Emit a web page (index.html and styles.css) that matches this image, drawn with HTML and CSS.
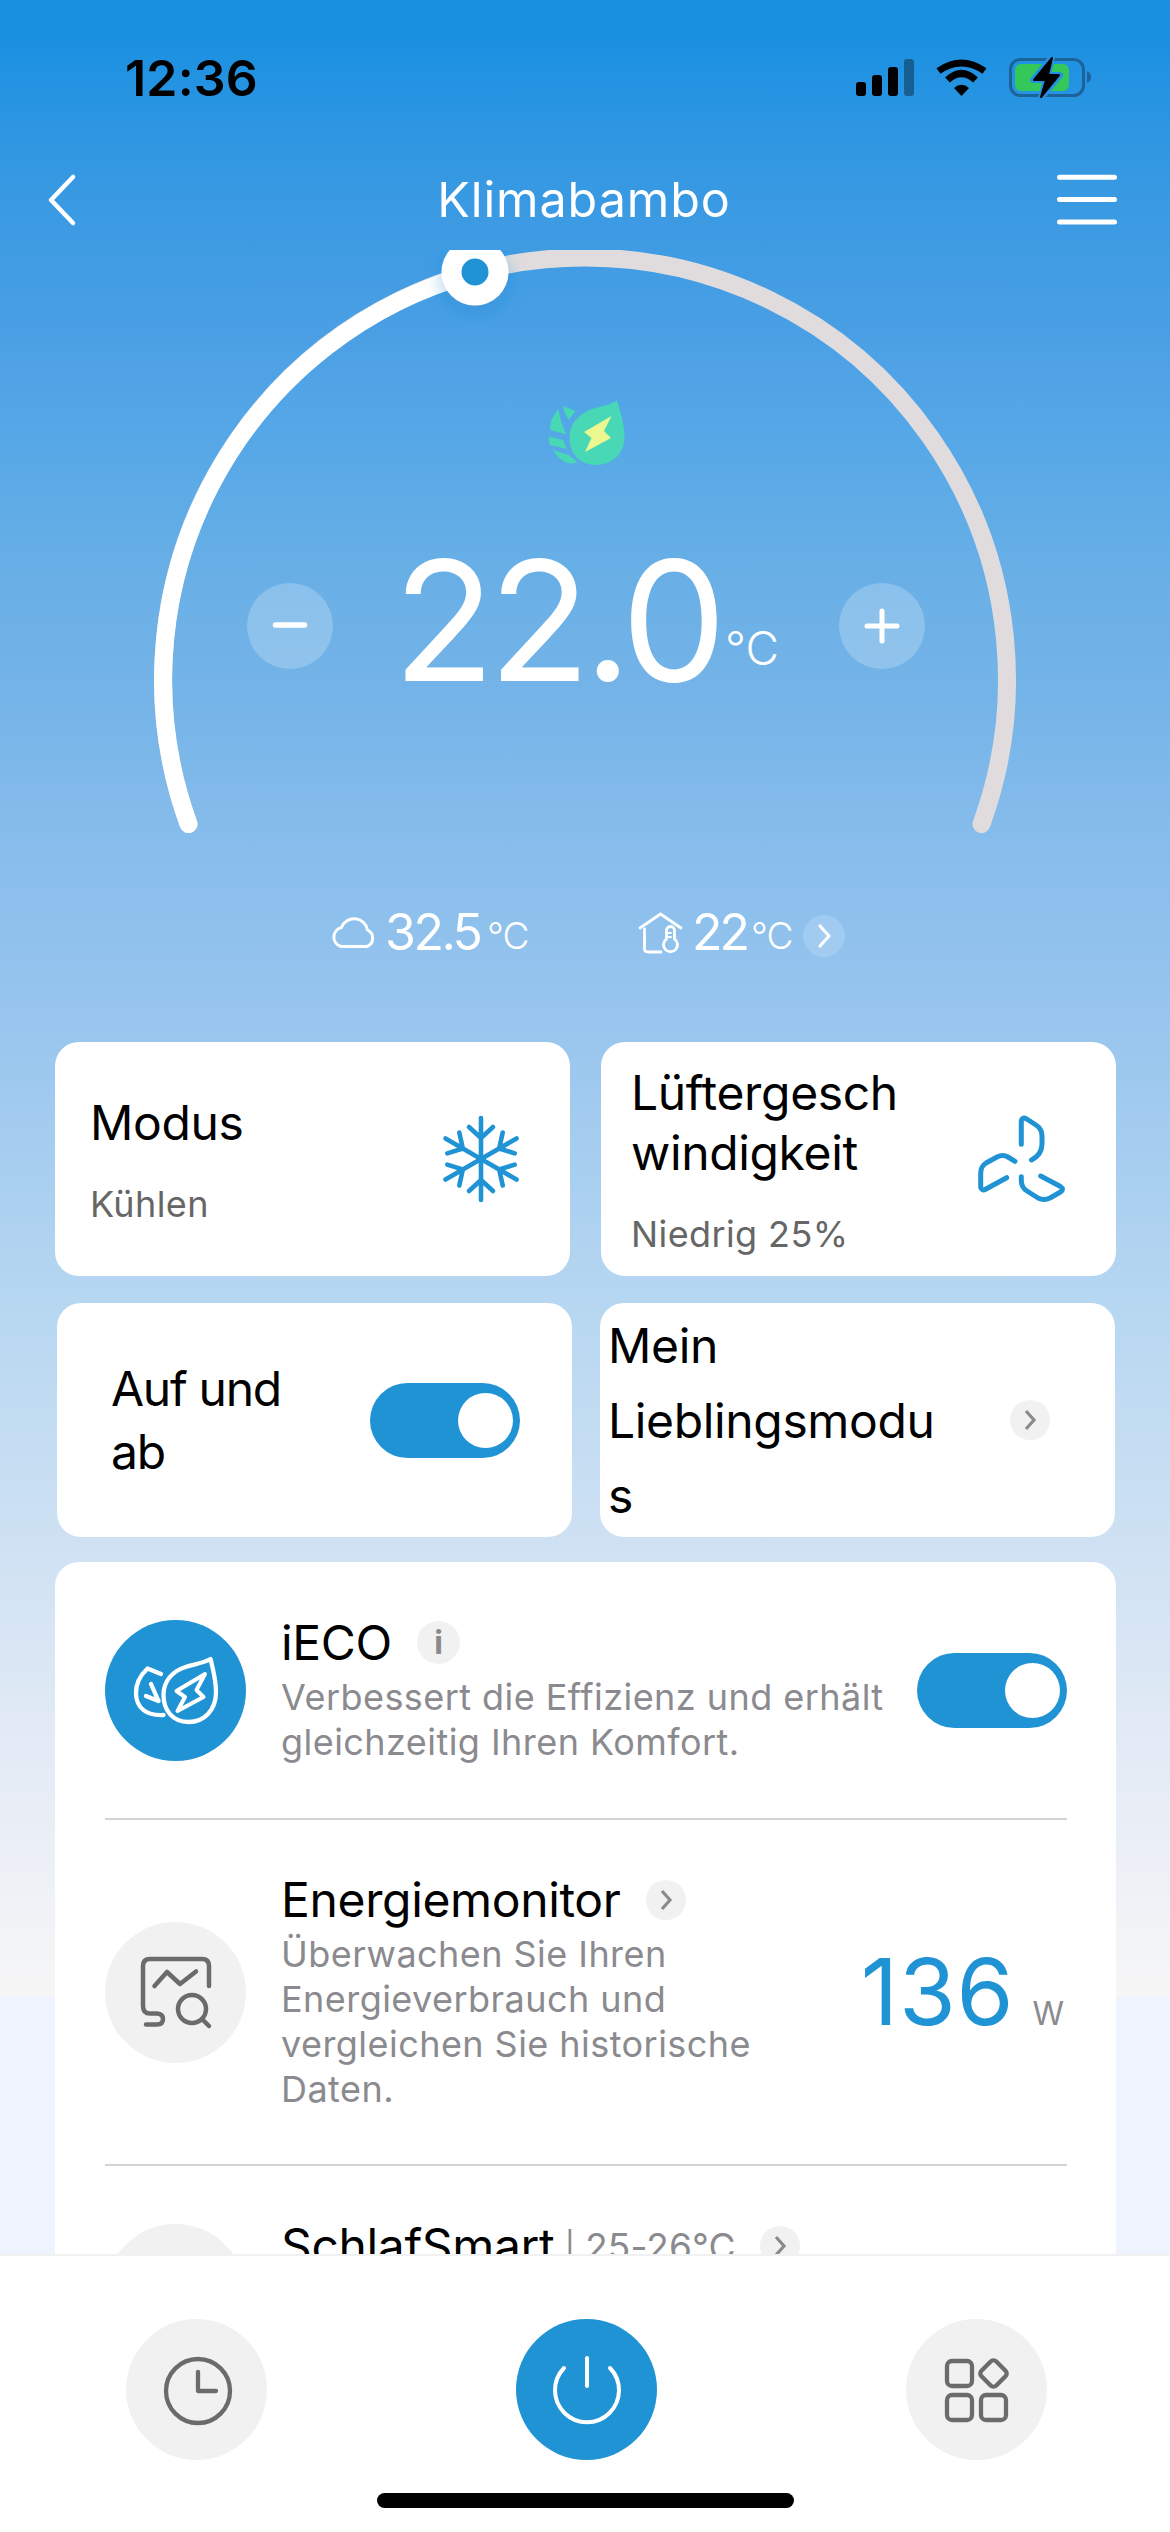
FILE: index.html
```html
<!DOCTYPE html>
<html lang="de">
<head>
<meta charset="utf-8">
<title>Klimabambo</title>
<link rel="stylesheet" href="styles.css">
</head>
<body>
<div class="screen">
  <div class="statusbar">
    <span class="time">12:36</span>
    <svg class="status-icons" width="236" height="40" viewBox="0 0 236 40">
      <rect x="0" y="24" width="10" height="14" rx="3"/>
      <rect x="16" y="17" width="10" height="21" rx="3"/>
      <rect x="32" y="9" width="10" height="29" rx="3"/>
      <rect x="48" y="1" width="10" height="37" rx="3" opacity=".35"/>
      <path d="M82.500 11 Q105.500 -5 128.500 11" transform="translate(0 2)" fill="none" stroke="#000" stroke-width="7"/>
      <path d="M91.500 22 Q105.500 9 119.500 22" fill="none" stroke="#000" stroke-width="7"/>
      <path d="M98 30 Q105.500 23.500 113 30 L105.500 38Z"/>
      <rect x="154.500" y="1.500" width="73" height="36" rx="10" fill="none" stroke="#1b6399" stroke-width="3"/>
      <path d="M231 13 q4 2 4 6 t-4 6z" fill="#1b6399"/>
      <rect x="159" y="6" width="54" height="27" rx="6" fill="#34c759"/>
      <path d="M196 -1 L177 22 H190 L185 40 L204 17 H192Z" stroke="#2391e2" stroke-width="6" stroke-linejoin="round"/>
      <path d="M196 0 L178 22 H190 L185 39 L203 17 H192Z" stroke="#000" stroke-width="2" stroke-linejoin="round"/>
    </svg>
  </div>
  <header class="header">
    <svg width="28" height="52" viewBox="0 0 28 52"><path d="M25 3 L3 26 L25 49" class="ln" stroke-width="4.500"/></svg>
    <h1>Klimabambo</h1>
    <svg width="60" height="52" viewBox="0 0 60 52"><path d="M2.500 3.300H57.500M2.500 25.500H57.500M2.500 48H57.500" class="ln" stroke-width="5"/></svg>
  </header>
  <section class="dial">
    <svg class="arc" width="920" height="600" viewBox="125 250 920 600">
      <defs><filter id="sh" x="-60%" y="-60%" width="220%" height="220%"><feDropShadow dx="0" dy="8" stdDeviation="9" flood-color="#1f86cf" flood-opacity=".35"/></filter></defs>
      <path d="M188.500 824 A422 422 0 1 1 981.500 824" fill="none" stroke="#e0dcdd" stroke-width="18" stroke-linecap="round"/>
      <path d="M188.500 824 A422 422 0 0 1 475 272.600" fill="none" stroke="#fff" stroke-width="18" stroke-linecap="round"/>
      <circle cx="475" cy="272" r="33.500" fill="#fff" filter="url(#sh)"/>
      <circle cx="475" cy="272" r="13.500" fill="#1f93d4"/>
    </svg>
    <div class="dial-body">
      <svg width="77" height="66" viewBox="548 400 77 66">
        <g fill="#49d8b5">
          <path d="M617 400.500 C620 411 624.500 424 624.500 437 C624.500 454 612 465 596 465 C580 465 569.500 453 569.500 438 C569.500 423 579 414 592 409 C602 406 611 404.500 617 400.500Z"/>
          <path d="M563 406 L575.500 411 L569 419.500 Q564 414 563 406Z"/>
          <path d="M558.500 409 Q560 422 566.500 434.500 L550 430 Q550 418 558.500 409Z"/>
          <path d="M549 436.500 L563 440 L567 449 L550 445 Q548 440 549 436.500Z"/>
          <path d="M553 450 L569 455 L577.500 462.500 Q563 467 553 450Z"/>
        </g>
        <path d="M611.500 416 L584 432 L591.500 438 L585 452 L611 438 L604 431Z" fill="#ecf88f"/>
      </svg>
      <div class="setpoint">
        <span class="round"><svg width="34" height="36" viewBox="0 0 34 36"><path d="M2.500 17H31.500" class="ln" stroke-width="5.500"/></svg></span>
        <div class="temp"><span class="deg">22.0</span><span class="unit">°C</span></div>
        <span class="round"><svg width="36" height="36" viewBox="0 0 36 36"><path d="M3 18H33M18 3V33" class="ln" stroke-width="5"/></svg></span>
      </div>
    </div>
  </section>
  <div class="readings">
    <div class="reading outdoor">
      <svg width="46" height="34" viewBox="0 0 46 34"><path d="M10 31.500 H36 A9 9 0 0 0 36.500 15 A13.500 13.500 0 0 0 10.500 12.500 A9.800 9.800 0 0 0 10 31.500Z" class="ln" stroke-width="3"/></svg>
      <span class="num">32.5</span><span class="u">°C</span>
    </div>
    <div class="reading indoor">
      <svg width="46" height="42" viewBox="0 0 46 42"><g class="ln" stroke-width="2.800"><path d="M2 16 L22.500 2 L43 16M6.500 17V37Q6.500 40 10 40H23"/><path d="M28.500 27V18.500a4 4 0 0 1 8 0V27a7 7 0 1 1-8 0Z"/><path d="M29 21h4M29 25h4" stroke-width="2"/></g></svg>
      <span class="num">22</span><span class="u">°C</span>
      <span class="go"><svg width="16" height="26" viewBox="0 0 16 26"><path d="M4 3L13 13L4 23" class="ln" stroke-width="3.200"/></svg></span>
    </div>
  </div>
  <main class="cards">
    <div class="row">
      <article class="card mode">
        <div><h2>Modus</h2><p>Kühlen</p></div>
        <svg width="82" height="90" viewBox="-41 -45 82 90"><g fill="none" stroke="#1f93d4" stroke-width="4.600" stroke-linecap="round" stroke-linejoin="round">
          <g id="ray"><path d="M0 0V-41M-12 -32L0 -21L12 -32"/></g>
          <use href="#ray" transform="rotate(60)"/><use href="#ray" transform="rotate(120)"/><use href="#ray" transform="rotate(180)"/><use href="#ray" transform="rotate(240)"/><use href="#ray" transform="rotate(300)"/>
        </g></svg>
      </article>
      <article class="card fan">
        <div><h2>Lüftergesch<br>windigkeit</h2><p>Niedrig 25%</p></div>
        <svg width="92" height="92" viewBox="975 1113 92 92"><g fill="none" stroke="#1f93d4" stroke-width="5" stroke-linecap="round" stroke-linejoin="round">
          <path d="M1021.300 1144.300V1121Q1022 1116.500 1026.700 1119L1036 1125Q1042 1129 1042 1136V1144Q1042 1154.500 1031.500 1160"/>
          <path d="M1015 1161.300L1008 1157Q1003 1154 997 1157L986 1163Q980.700 1166.500 980.700 1173V1187Q981.500 1191.500 986 1189L1006.700 1177.700"/>
          <path d="M1021.300 1176.700V1181Q1021.500 1187.500 1027 1191L1038 1198Q1044 1201 1050 1198L1060.500 1192Q1064.500 1189 1060.500 1186.500L1040.700 1176"/>
        </g></svg>
      </article>
    </div>
    <div class="row low">
      <article class="card swing"><h2>Auf und<br>ab</h2><span class="toggle"></span></article>
      <article class="card fav"><h2>Mein<br>Lieblingsmodu<br>s</h2><span class="badge"><svg width="14" height="22" viewBox="0 0 14 22"><path d="M3 2L11 11L3 20"/></svg></span></article>
    </div>
    <section class="panel">
      <div class="item ieco">
        <span class="disc blue"><svg width="86" height="70" viewBox="132.500 1655 86 70"><g class="ln" stroke-width="4.300">
          <path d="M210 1659C213 1671 215.500 1680 215.500 1692C215.500 1710 204 1722 188 1722C172 1722 163 1710 163 1695C163 1681 172 1671 185 1667C195 1664 203 1663 210 1659Z"/>
          <path d="M160.500 1674L147 1668.500C139 1676 135 1684 135.500 1694C136 1708 146 1716 163 1715"/>
          <path d="M150.500 1684L158 1701M145.500 1696L158 1701"/>
          <path d="M204.500 1674L176 1691L184.500 1697L177 1711L203 1697L196 1690Z" stroke-width="4"/>
        </g></svg></span>
        <div class="txt"><h3>iECO <span class="badge info"><i>i</i></span></h3><p>Verbessert die Effizienz und erhält<br>gleichzeitig Ihren Komfort.</p></div>
        <span class="toggle"></span>
      </div>
      <div class="item energy">
        <span class="disc"><svg width="72" height="74" viewBox="140 1955 72 74"><g fill="none" stroke="#6b6b6b" stroke-width="4.500" stroke-linecap="round" stroke-linejoin="round">
          <path d="M209 1986V1966Q209 1959 202 1959H150Q143 1959 143 1966V2006Q143 2013.500 150 2013.500H157Q163 2014 163 2019Q163 2024.500 157 2024.500H146"/>
          <path d="M154.500 1986L167 1972L180 1984L196 1971.500"/><circle cx="192" cy="2009" r="14"/><path d="M202 2019L209 2026"/>
        </g></svg></span>
        <div class="txt"><h3>Energiemonitor <span class="badge"><svg width="14" height="22" viewBox="0 0 14 22"><path d="M3 2L11 11L3 20"/></svg></span></h3><p>Überwachen Sie Ihren<br>Energieverbrauch und<br>vergleichen Sie historische<br>Daten.</p></div>
        <div class="watts"><b>136</b><span>W</span></div>
      </div>
      <div class="item sleep">
        <span class="disc"></span>
        <div class="txt"><h3>SchlafSmart<small><span class="bar">|</span>25-26°C</small><span class="badge"><svg width="14" height="22" viewBox="0 0 14 22"><path d="M3 2L11 11L3 20"/></svg></span></h3></div>
      </div>
    </section>
  </main>
  <footer class="tabs">
    <div class="tabrow">
      <span class="disc"><svg width="70" height="70" viewBox="-35 -35 70 70"><g fill="none" stroke="#6b6b6b" stroke-width="4.300" stroke-linecap="round" stroke-linejoin="round"><circle cx="1" cy="1" r="32"/><path d="M1 -18V1H19"/></g></svg></span>
      <span class="disc blue"><svg width="72" height="72" viewBox="-36 -36 72 72"><path d="M-23 -22A32 32 0 1 0 23 -22M0 -32V-4" class="ln" stroke-width="4"/></svg></span>
      <span class="disc"><svg width="70" height="70" viewBox="-35 -35 70 70"><g fill="none" stroke="#6b6b6b" stroke-width="4.300" stroke-linejoin="round"><rect x="-30" y="-29" width="25" height="25" rx="5"/><rect x="-30" y="5" width="25" height="25" rx="5"/><rect x="4" y="5" width="25" height="25" rx="5"/><rect x="-10.500" y="-10.500" width="21" height="21" rx="4" transform="translate(16.500 -16.500) rotate(45)"/></g></svg></span>
    </div>
    <div class="home"></div>
  </footer>
</div>
</body>
</html>
```
FILE: styles.css
```css
* { box-sizing: border-box; margin: 0; padding: 0; }
body { width: 1170px; height: 2532px; overflow: hidden; font-family: Inter, "Liberation Sans", sans-serif; color: #000; }
svg { display: block; flex: none; overflow: visible; }
h1, h2, h3 { font-weight: 400; }
.ln { fill: none; stroke: #fff; stroke-linecap: round; stroke-linejoin: round; }
.screen {
  width: 1170px; height: 2532px; overflow: hidden; display: flex; flex-direction: column;
  background: linear-gradient(#1a90e1 0, #1a90e1 35px, #3398e2 160px, #4a9fe4 330px, #55a7e7 430px, #68afe6 570px, #75b4e8 700px, #88bdec 850px, #99c6ee 1030px, #b5d6f1 1290px, #cee1f3 1540px, #e4ebf6 1750px, #f6f6f6 1997px, #eef3fe 1997px);
}
.statusbar { height: 156px; flex: none; display: flex; justify-content: space-between; padding: 48px 78px 0 125px; }
.time { font-size: 50px; line-height: 60px; font-weight: 600; letter-spacing: .2px; }
.status-icons { margin-top: 10px; }
.header { height: 94px; flex: none; display: flex; justify-content: space-between; align-items: center; padding: 0 53px 6px 48px; color: #fff; }
.header h1 { font-size: 48.500px; line-height: 60px; letter-spacing: .9px; padding-left: 35px; }
.dial { height: 600px; flex: none; display: grid; justify-items: center; }
.arc { grid-area: 1 / 1; overflow: hidden; }
.dial-body { grid-area: 1 / 1; width: 678px; margin-left: 2px; padding-top: 150px; display: flex; flex-direction: column; align-items: center; gap: 84px; }
.setpoint { width: 100%; display: flex; align-items: center; justify-content: space-between; color: #fff; height: 152px; }
.round { width: 86px; height: 86px; border-radius: 50%; background: rgba(255,255,255,.22); display: grid; place-items: center; }
.temp { display: flex; align-items: flex-start; height: 152px; }
.deg { font-size: 167px; line-height: 140px; letter-spacing: -6.500px; }
.unit { font-size: 46px; line-height: 56px; font-weight: 300; margin-left: 5px; padding-top: 70px; }
.readings { height: 192px; flex: none; display: flex; padding: 56px 0 0 331px; color: #fff; }
.reading { display: flex; align-items: center; height: 60px; }
.outdoor { width: 307px; }
.outdoor svg { margin-top: -8px; }
.num { font-size: 50px; line-height: 60px; margin: -8px 0 0 8px; letter-spacing: -2.500px; width: 102px; }
.indoor svg { margin-top: -6px; }
.indoor .go svg { margin-top: 0; }
.indoor .num { width: 59px; letter-spacing: -3px; }
.u { font-size: 37px; line-height: 48px; width: 52px; letter-spacing: -1px; font-weight: 300; }
.go { width: 42px; height: 42px; border-radius: 50%; background: rgba(255,255,255,.16); display: grid; place-items: center; }
.cards { flex: 1; min-height: 0; overflow: hidden; padding: 0 54px 0 55px; display: flex; flex-direction: column; }
.row { display: flex; justify-content: space-between; height: 234px; flex: none; margin-bottom: 27px; }
.row.low { padding: 0 1px 0 2px; margin-bottom: 25px; }
.card { width: 515px; height: 234px; border-radius: 24px; background: #fff; display: flex; align-items: center; justify-content: space-between; }
.card h2, .item h3 { font-size: 48px; line-height: 60px; letter-spacing: -.35px; }
.card p { font-size: 36px; line-height: 44px; color: #666; letter-spacing: .4px; margin-top: 29px; }
.mode { padding: 0 48px 0 35px; }
.fan { padding: 0 49px 0 30px; }
.swing { padding: 0 52px 0 54px; }
.card.swing h2 { line-height: 63px; letter-spacing: -1.300px; }
.fav { padding: 0 65px 0 8px; }
.card.fav h2 { line-height: 75px; }
.toggle { width: 150px; height: 75px; border-radius: 38px; background: #1f93d4; display: flex; justify-content: flex-end; align-items: center; padding: 0 7px; flex: none; }
.toggle::after { content: ""; width: 55px; height: 55px; border-radius: 50%; background: #fff; }
.badge { width: 40px; height: 40px; border-radius: 50%; background: #f1f1f1; display: inline-grid; place-items: center; flex: none; }
.badge path { fill: none; stroke: #8a8a8a; stroke-width: 3.200; }
.panel { background: #fff; border-radius: 24px 24px 0 0; padding: 0 49px 0 50px; height: 692px; overflow: hidden; flex: none; }
.item { display: flex; align-items: center; border-bottom: 2px solid #d4d4d4; }
.ieco { height: 258px; }
.energy { height: 346px; }
.sleep { height: 258px; border: 0; align-items: flex-start; padding-top: 58px; }
.disc { width: 141px; height: 141px; border-radius: 50%; background: #f1f1f1; display: grid; place-items: center; flex: none; }
.disc.blue { background: #1f93d4; }
.txt { flex: 1; margin-left: 35px; white-space: nowrap; }
.item h3 { display: flex; align-items: center; gap: 25px; height: 60px; padding-bottom: 4px; }
.info { width: 43px; height: 43px; }
.info i { font: 700 32px/43px Inter, sans-serif; color: #8a8a8a; }
.txt p { font-size: 36px; line-height: 45.200px; color: #8a8a8f; letter-spacing: .45px; }
.watts { display: flex; align-items: baseline; gap: 18px; padding-right: 3px; }
.watts b { font-size: 92px; font-weight: 400; color: #1f93d4; line-height: 100px; letter-spacing: .8px; }
.watts span { font-size: 32px; color: #8a8a8f; }
.sleep .txt { margin-top: -6px; }
.sleep small { font-size: 37px; color: #8a8a8f; margin: 4px -1px 0 -15px; letter-spacing: .1px; }
.bar { margin-right: 10px; font-size: 32px; }
.tabs { height: 278px; flex: none; background: #fff; border-top: 2px solid #f1f1f1; display: flex; flex-direction: column; align-items: center; }
.tabrow { width: 921px; margin: 63px 0 0 3px; display: flex; justify-content: space-between; }
.home { width: 417px; height: 15px; border-radius: 8px; background: #000; margin-top: 33px; }
```
